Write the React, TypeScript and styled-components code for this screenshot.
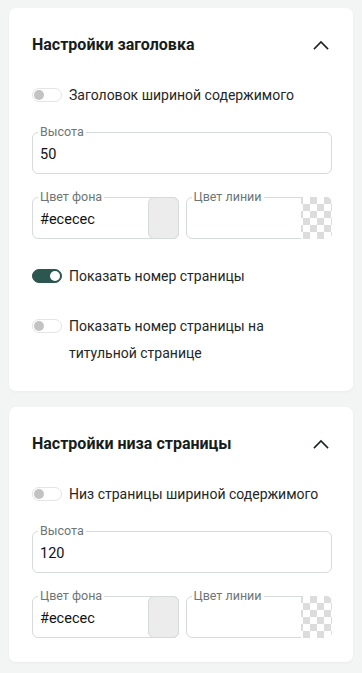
import React from "react";
import styled, { createGlobalStyle } from "styled-components";

const Global = createGlobalStyle`
  html, body { margin: 0; padding: 0; background: #f3f4f4; }
  body { font-family: Roboto, "Noto Sans", sans-serif; color: #1f2727; }
  * { box-sizing: border-box; }
`;

const Page = styled.div`
  display: flex;
  flex-direction: column;
  gap: 16px;
  padding: 8px 9px 10px 9px;
  width: 362px;
`;

const Card = styled.section`
  background: #ffffff;
  border-radius: 7px;
  box-shadow: 0 1px 3px rgba(0, 0, 0, 0.04);
  padding: 25px 21px 24px 23px;
  display: flex;
  flex-direction: column;
`;

const Header = styled.div`
  display: flex;
  align-items: center;
  justify-content: space-between;
  height: 24px;
  padding-right: 3px;
  margin-bottom: 25px;
`;

const Title = styled.h2`
  margin: 0;
  font-size: 16px;
  font-weight: 700;
  letter-spacing: 0;
  line-height: 24px;
  color: #161d1d;
`;

const ToggleRow = styled.label<{ $gap?: number }>`
  display: flex;
  align-items: flex-start;
  gap: 7px;
  font-size: 14px;
  line-height: 27px;
  color: #1f2727;
  margin-bottom: ${(p) => p.$gap ?? 0}px;
`;

const Track = styled.span<{ $on?: boolean }>`
  flex: none;
  width: 30px;
  height: 14px;
  margin-top: 6px;
  border-radius: 7px;
  border: 1px solid ${(p) => (p.$on ? "#2c5650" : "#e2e5e5")};
  background: ${(p) => (p.$on ? "#2c5650" : "#ffffff")};
  display: flex;
  align-items: center;
  justify-content: ${(p) => (p.$on ? "flex-end" : "flex-start")};
  padding: 0 1px;
`;

const Knob = styled.span<{ $on?: boolean }>`
  width: 10px;
  height: 10px;
  border-radius: 50%;
  background: ${(p) => (p.$on ? "#ffffff" : "#c3c3c3")};
`;

const Field = styled.div<{ $gap?: number }>`
  position: relative;
  display: flex;
  align-items: stretch;
  flex: none;
  height: 42px;
  border: 1px solid #d6dada;
  border-radius: 6px;
  margin-top: 6px;
  margin-bottom: ${(p) => p.$gap ?? 0}px;
  min-width: 0;
`;

const FieldLabel = styled.span`
  position: absolute;
  left: 5px;
  top: -8px;
  padding: 0 2px;
  background: #ffffff;
  font-size: 12.5px;
  line-height: 14px;
  color: #6d7575;
`;

const Value = styled.span`
  flex: 1;
  display: flex;
  align-items: center;
  padding: 3px 7px 0 7px;
  font-size: 14.5px;
  color: #111;
`;

const Swatch = styled.span<{ $color?: string }>`
  flex: none;
  width: 31px;
  margin: -1px -1px -1px 0;
  border: 1px solid #d6dada;
  border-radius: 6px;
  background: ${(p) => p.$color ?? "#ececec"};
`;

const Checker = styled.span`
  flex: none;
  width: 31px;
  margin: -1px -1px -1px 0;
  border-radius: 0 6px 6px 0;
  overflow: hidden;
  background-color: #ffffff;
  background-image: conic-gradient(
    #dcdcdc 0 25%,
    #ffffff 0 50%,
    #dcdcdc 0 75%,
    #ffffff 0
  );
  background-size: 14px 14px;
  background-position: 2px 0;
`;

const Row = styled.div<{ $gap?: number }>`
  display: flex;
  gap: 7px;
  margin-bottom: ${(p) => p.$gap ?? 0}px;
  & > ${Field} {
    flex: 1;
  }
`;

const Chevron = () => (
  <svg width="16" height="10" viewBox="0 0 16 10" fill="none">
    <polyline
      points="1.5,8.5 8,2 14.5,8.5"
      stroke="#1c2424"
      strokeWidth="1.6"
      strokeLinecap="square"
    />
  </svg>
);

const Toggle = ({ on, label, gap }: { on?: boolean; label: React.ReactNode; gap?: number }) => (
  <ToggleRow $gap={gap}>
    <Track $on={on}>
      <Knob $on={on} />
    </Track>
    <span>{label}</span>
  </ToggleRow>
);

const ColorFields = ({ gap }: { gap?: number }) => (
  <Row $gap={gap}>
    <Field>
      <FieldLabel>Цвет фона</FieldLabel>
      <Value>#ececec</Value>
      <Swatch $color="#ececec" />
    </Field>
    <Field>
      <FieldLabel>Цвет линии</FieldLabel>
      <Value />
      <Checker />
    </Field>
  </Row>
);

export default function App() {
  return (
    <>
      <Global />
      <Page>
        <Card>
          <Header>
            <Title>Настройки заголовка</Title>
            <Chevron />
          </Header>
          <Toggle label="Заголовок шириной содержимого" gap={17} />
          <Field $gap={17}>
            <FieldLabel>Высота</FieldLabel>
            <Value>50</Value>
          </Field>
          <ColorFields gap={24} />
          <Toggle on label="Показать номер страницы" gap={23} />
          <Toggle label={<>Показать номер страницы на<br />титульной странице</>} />
        </Card>
        <Card>
          <Header>
            <Title>Настройки низа страницы</Title>
            <Chevron />
          </Header>
          <Toggle label="Низ страницы шириной содержимого" gap={17} />
          <Field $gap={17}>
            <FieldLabel>Высота</FieldLabel>
            <Value>120</Value>
          </Field>
          <ColorFields />
        </Card>
      </Page>
    </>
  );
}
